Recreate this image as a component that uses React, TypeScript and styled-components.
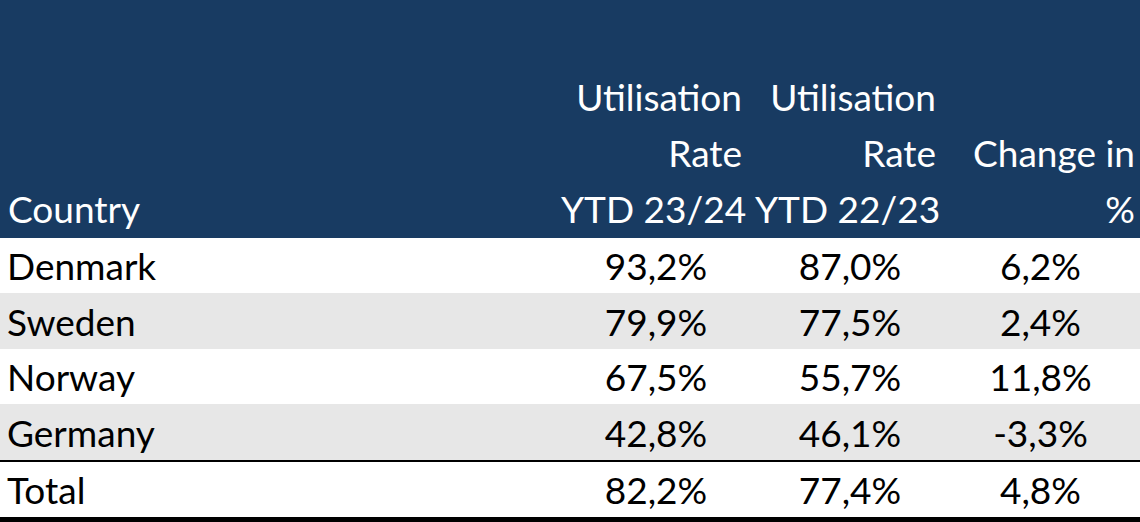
import React from 'react';
import styled, { createGlobalStyle } from 'styled-components';

type Align = 'left' | 'center' | 'right';

interface Column {
  title: string[];
  align: Align;
  padLeft: number;
}

interface Row {
  country: string;
  values: string[];
}

const columns: Column[] = [
  { title: ['Utilisation', 'Rate', 'YTD 23/24'], align: 'center', padLeft: 12 },
  { title: ['Utilisation', 'Rate', 'YTD 22/23'], align: 'center', padLeft: 12 },
  { title: ['Change in', '%'], align: 'center', padLeft: 0 },
];

const rows: Row[] = [
  { country: 'Denmark', values: ['93,2%', '87,0%', '6,2%'] },
  { country: 'Sweden', values: ['79,9%', '77,5%', '2,4%'] },
  { country: 'Norway', values: ['67,5%', '55,7%', '11,8%'] },
  { country: 'Germany', values: ['42,8%', '46,1%', '-3,3%'] },
];

const total: Row = { country: 'Total', values: ['82,2%', '77,4%', '4,8%'] };

const GlobalStyle = createGlobalStyle`
  html, body {
    margin: 0;
    padding: 0;
    background: #ffffff;
  }
  body {
    font-family: Lato, "Open Sans", sans-serif;
    font-size: 37px;
    color: #000000;
  }
`;

const Table = styled.div`
  width: 1140px;
  display: flex;
  flex-direction: column;
`;

const RowGrid = styled.div<{ $bg: string; $height: number }>`
  display: grid;
  grid-template-columns: 553px 194px 194px 1fr;
  height: ${(p) => p.$height}px;
  background: ${(p) => p.$bg};
  align-items: center;
`;

const HeaderGrid = styled(RowGrid)`
  align-items: end;
  color: #ffffff;
  padding-bottom: 1px;
  box-sizing: border-box;
`;

const HeadCell = styled.div<{ $align: Align }>`
  text-align: ${(p) => p.$align};
  padding: 0 5px 0 8px;
  line-height: 56px;
  white-space: nowrap;
`;

const Cell = styled.div<{ $align: Align; $padLeft: number }>`
  text-align: ${(p) => p.$align};
  padding-left: ${(p) => p.$padLeft}px;
  line-height: 1;
  white-space: nowrap;
`;

const CountryCell = styled(Cell)`
  padding-left: 7px;
`;

const Divider = styled.div<{ $size: number }>`
  height: ${(p) => p.$size}px;
  background: #000000;
`;

const DataRow = ({ row, bg, height }: { row: Row; bg: string; height: number }) => (
  <RowGrid $bg={bg} $height={height}>
    <CountryCell $align="left" $padLeft={7}>
      {row.country}
    </CountryCell>
    {row.values.map((v, i) => (
      <Cell key={i} $align={columns[i].align} $padLeft={columns[i].padLeft}>
        {v}
      </Cell>
    ))}
  </RowGrid>
);

const App = () => (
  <>
    <GlobalStyle />
    <Table>
      <HeaderGrid $bg="#183b62" $height={238}>
        <HeadCell $align="left">Country</HeadCell>
        {columns.map((c, i) => (
          <HeadCell key={i} $align="right">
            {c.title.map((line, j) => (
              <div key={j}>{line}</div>
            ))}
          </HeadCell>
        ))}
      </HeaderGrid>
      {rows.map((r, i) => (
        <DataRow key={r.country} row={r} bg={i % 2 ? '#e7e7e7' : '#ffffff'} height={i % 2 ? 56 : 55} />
      ))}
      <Divider $size={2} />
      <DataRow row={total} bg="#ffffff" height={55} />
      <Divider $size={5} />
    </Table>
  </>
);

export default App;
